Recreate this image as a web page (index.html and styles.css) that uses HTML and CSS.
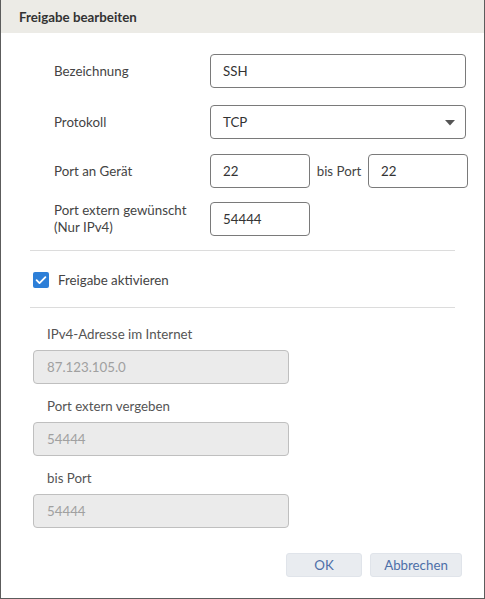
FILE: index.html
```html
<!DOCTYPE html>
<html lang="de">
<head>
<meta charset="utf-8">
<title>Freigabe bearbeiten</title>
<link rel="stylesheet" href="styles.css">
</head>
<body>
<div class="dialog">
  <div class="header">Freigabe bearbeiten</div>
  <div class="content">
    <div class="form">
      <div class="row row-1">
        <label class="label">Bezeichnung</label>
        <div class="field wide">SSH</div>
      </div>
      <div class="row row-2">
        <label class="label">Protokoll</label>
        <div class="field wide select">TCP
          <svg class="caret" width="10" height="6" viewBox="0 0 10 6"><path d="M0 0h10L5 5.5z" fill="#555"/></svg>
        </div>
      </div>
      <div class="row row-3">
        <label class="label">Port an Gerät</label>
        <div class="field small">22</div>
        <span class="between">bis Port</span>
        <div class="field small">22</div>
      </div>
      <div class="row row-4">
        <label class="label two">Port extern gewünscht<br>(Nur IPv4)</label>
        <div class="field small">54444</div>
      </div>
    </div>
    <hr class="divider">
    <div class="check-row">
      <span class="checkbox">
        <svg width="16" height="16" viewBox="0 0 16 16"><path d="M3.6 8.2l2.9 2.9 5.9-6" fill="none" stroke="#fff" stroke-width="1.8" stroke-linecap="round" stroke-linejoin="round"/></svg>
      </span>
      <span class="check-label">Freigabe aktivieren</span>
    </div>
    <hr class="divider">
    <div class="readonly">
      <div class="group">
        <div class="ro-label">IPv4-Adresse im Internet</div>
        <div class="ro-field">87.123.105.0</div>
      </div>
      <div class="group">
        <div class="ro-label">Port extern vergeben</div>
        <div class="ro-field">54444</div>
      </div>
      <div class="group">
        <div class="ro-label">bis Port</div>
        <div class="ro-field">54444</div>
      </div>
    </div>
    <div class="buttons">
      <button class="btn ok">OK</button>
      <button class="btn">Abbrechen</button>
    </div>
  </div>
</div>
</body>
</html>
```

FILE: styles.css
```css
* { box-sizing: border-box; }
html, body { margin: 0; padding: 0; }
body {
  width: 485px;
  height: 599px;
  font-family: "Lato", "Noto Sans", sans-serif;
  font-size: 13.3px;
  color: #444;
  background: #fff;
}
.dialog {
  width: 485px;
  height: 599px;
  border: 1px solid #5c5c5c;
  border-top: 0;
  display: flex;
  flex-direction: column;
}
.header {
  height: 33px;
  background: #ecebe6;
  padding-left: 18px;
  line-height: 35px;
  font-weight: 700;
  color: #333;
}
.content {
  padding: 21px 17px 0 28px;
}
.form {
  padding-left: 25px;
}
.row {
  display: flex;
  align-items: center;
}
.row-1 { margin-bottom: 17px; }
.row-2 { margin-bottom: 15px; }
.row-3 { margin-bottom: 14px; }
.label {
  flex: 0 0 156px;
  color: #444;
}
.label.two { line-height: 17px; }
.field {
  flex: none;
  height: 34px;
  border: 1px solid #7a7a7a;
  border-radius: 4px;
  padding: 0 12px;
  display: flex;
  align-items: center;
  color: #333;
}
.wide { width: 256px; }
.select { justify-content: space-between; padding-right: 10px; }
.caret { margin-top: 1px; }
.small { width: 100px; }
.between {
  flex: 0 0 58px;
  text-align: center;
  color: #444;
}
.divider {
  border: 0;
  border-top: 1px solid #dcdcdc;
  margin: 14px 12px 0 1px;
}
.check-row {
  display: flex;
  align-items: center;
  height: 20px;
  margin: 19px 0 17px 4px;
}
.checkbox {
  width: 16px;
  height: 16px;
  border-radius: 2px;
  background: #2d7fd8;
  display: flex;
  margin-right: 9px;
}
.check-label { color: #444; }
.readonly {
  padding-left: 4px;
  margin-top: 16px;
}
.group { margin-bottom: 12px; }
.ro-label {
  line-height: 20px;
  padding-left: 14px;
  margin-bottom: 6px;
  color: #555;
}
.ro-field {
  width: 256px;
  height: 34px;
  background: #ebebeb;
  border: 1px solid #bfbfbf;
  border-radius: 4px;
  padding: 0 13px;
  display: flex;
  align-items: center;
  color: #a0a0a0;
}
.buttons {
  display: flex;
  justify-content: flex-end;
  gap: 8px;
  margin-top: 25px;
  margin-right: 5px;
}
.btn {
  font-family: inherit;
  font-size: 13.3px;
  height: 24px;
  border: 1px solid #e0e4ea;
  border-radius: 3px;
  background: #e9ecf0;
  color: #4d6fa8;
  padding: 0;
  width: 92px;
}
.btn.ok { width: 76px; }
```
